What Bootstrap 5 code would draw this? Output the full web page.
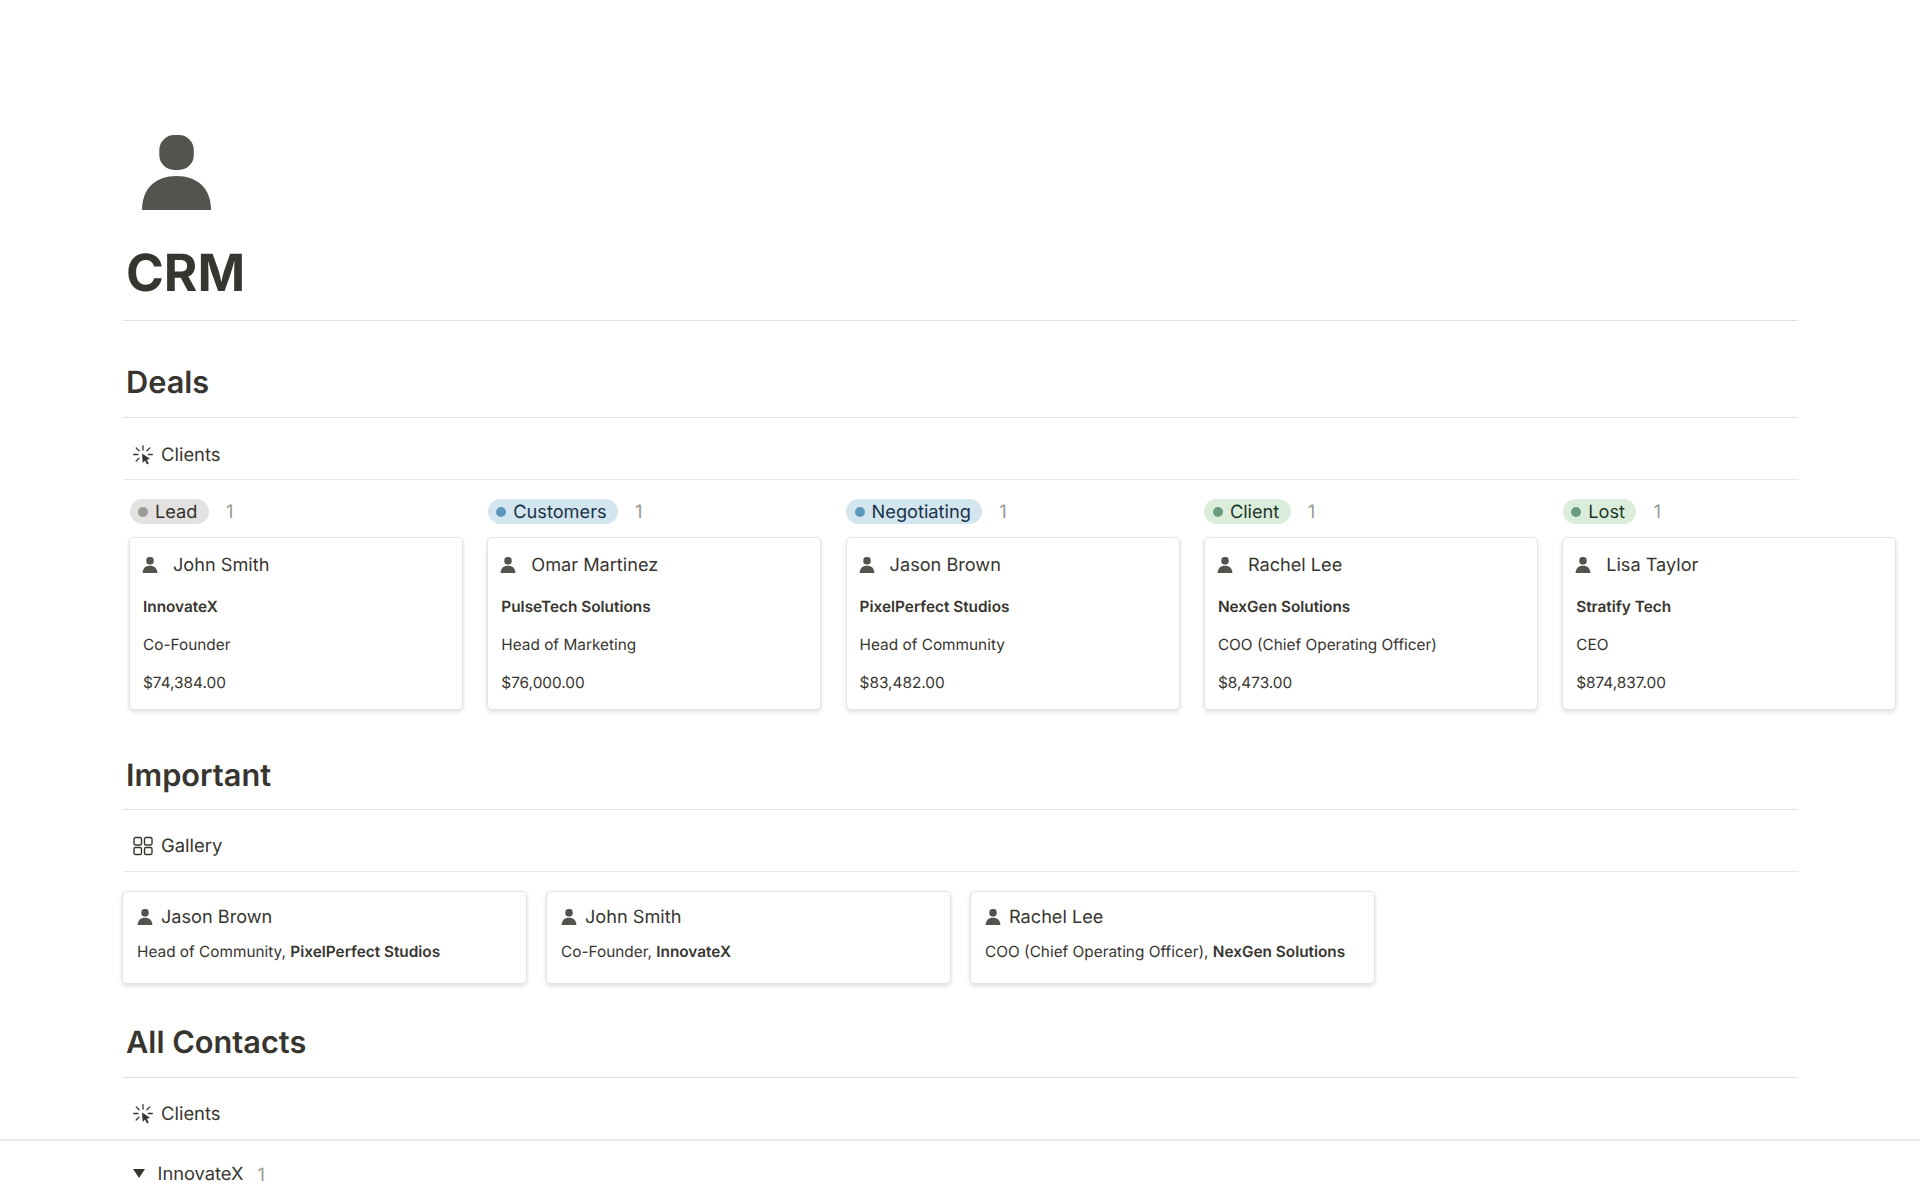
<!DOCTYPE html>
<html lang="en">
<head>
<meta charset="utf-8">
<title>CRM</title>
<link href="https://cdn.jsdelivr.net/npm/bootstrap@5.3.0/dist/css/bootstrap.min.css" rel="stylesheet">
<style>
html,body{height:1199px;overflow:hidden;background:#fff}
body{font-family:Inter,"Liberation Sans",sans-serif;color:#37352f;text-rendering:geometricPrecision}
.crm-page{margin-left:123px;width:1675px;padding-top:135px}
.crm-hero{display:block;width:69px;height:75px;margin-left:19px;fill:#55534e}
.crm-title{font-size:51.2px;font-weight:700;line-height:60px;margin:32px 0 0;padding:1px 0 0 3px;height:79px;color:#37352f}
.crm-rule{border-bottom:1px solid #e0e0de}
.crm-h2{font-size:30.72px;font-weight:600;line-height:36px;margin:0;padding:44px 0 16px 3px;color:#37352f}
.crm-tab{height:62px;padding:15px 0 0 10px;font-size:18.43px;gap:8px;border-bottom:1px solid #e9e9e7}
.crm-tab svg{width:20px;height:20px;flex:none;margin-top:-2px}
.crm-tabg{padding-top:12px}
.crm-board{padding:19px 0 0 6px;width:1800px;gap:24.3px}
.crm-col{width:334px;flex:none}
.crm-pillrow{height:25px;margin-bottom:13px;gap:17px;padding-left:.5px;font-size:18.43px}
.crm-pill{height:25px;border-radius:13px;padding:2px 11.500px 0 8.500px;gap:7px;font-size:18.2px;line-height:23px}
.crm-dot{width:10px;height:10px;border-radius:50%;flex:none;margin-top:-2px}
.crm-count{color:#9b9a97;padding-top:2px}
.crm-card{border-radius:5px;border:1px solid #e4e4e2;box-shadow:0 2px 4px rgba(15,15,15,.14);background:#fff;color:#37352f}
.crm-boardcard{height:172.5px;padding:0 13px}
.crm-name{font-size:18.15px;height:49px;padding-top:7px;gap:15px}
.crm-name svg{width:16px;height:16px;flex:none;margin:-2px 0 0 -1px;fill:#55534e}
.crm-line{font-size:15.36px;height:38.5px;line-height:38.5px;white-space:nowrap}
.crm-line.crm-b{padding-top:1px}
.crm-b{font-weight:600}
.crm-gallery{padding-top:19px;gap:19px;margin-left:-1px}
.crm-gcard{width:405px;height:92.5px;padding:13px 14px 0}
.crm-gname{font-size:18.15px;gap:8px;height:26px}
.crm-gname svg{width:16px;height:16px;flex:none;margin-top:-2px;fill:#55534e}
.crm-gtext{font-size:15.36px;line-height:24px;margin-top:9px;white-space:nowrap}
.crm-h2b{padding-top:48.500px;padding-bottom:15px}
.crm-h2c{padding-top:41.500px}
.crm-wide{width:1920px;margin-left:-123px;border-bottom:2px solid #e9e9e7}
.crm-tabc{height:61px;padding:12px 0 0 10px;font-size:18.43px;gap:8px}
.crm-tabc svg{width:20px;height:20px;flex:none;margin-top:-2px}
.crm-group{padding:19.500px 0 0 9.500px;font-size:18.3px;line-height:24px}
.crm-tri{width:12px;height:9px;fill:#37352f;margin-right:13px}
.crm-groupn{margin-right:14px}
</style>
</head>
<body>
<svg width="0" height="0" class="position-absolute">
  <defs>
    <symbol id="i-person" viewBox="0 0 69 75"><rect x="17.3" y="0" width="34.500" height="35" rx="15"/><path d="M0 75C0 53 14 41 34.500 41S69 53 69 75z"/></symbol>
    <symbol id="i-click" viewBox="0 0 20 20"><g stroke="#37352f" stroke-width="1.3" stroke-linecap="round" fill="none"><path d="M10 .7v4.300M.7 9.500h4.300M15.300 9.500h4M3.200 2.900l2.900 2.900M16.800 2.900l-2.900 2.900M3.200 16l2.900-2.900"/></g><path d="M9 8.500l8 5.200-3.200 1 2 3.900-1.800.9-2-3.900-2.300 2.400z" fill="#37352f"/></symbol>
    <symbol id="i-grid" viewBox="0 0 20 20"><g fill="none" stroke="#37352f" stroke-width="1.4"><rect x="1" y="1.500" width="7.500" height="7.500" rx="1.6"/><rect x="11.500" y="1.500" width="7.500" height="7.500" rx="1.6"/><rect x="1" y="11.500" width="7.500" height="7" rx="1.6"/><rect x="11.500" y="11.500" width="7.500" height="7" rx="1.6"/></g></symbol>
  </defs>
</svg>
<div class="crm-page">
  <svg class="crm-hero"><use href="#i-person"/></svg>
  <h1 class="crm-title crm-rule">CRM</h1>

  <h2 class="crm-h2 crm-rule">Deals</h2>
  <div class="crm-tab d-flex align-items-center"><svg><use href="#i-click"/></svg><span>Clients</span></div>
  <div class="crm-board d-flex">
    <div class="crm-col">
      <div class="crm-pillrow d-flex align-items-center"><span class="crm-pill d-inline-flex align-items-center" style="background:#e3e2e0;color:#32302c"><span class="crm-dot" style="background:#9b9a97"></span>Lead</span><span class="crm-count">1</span></div>
      <div class="card crm-card crm-boardcard">
        <div class="crm-name d-flex align-items-center"><svg><use href="#i-person"/></svg><span>John Smith</span></div>
        <div class="crm-line crm-b">InnovateX</div><div class="crm-line">Co-Founder</div><div class="crm-line">$74,384.00</div>
      </div>
    </div>
    <div class="crm-col">
      <div class="crm-pillrow d-flex align-items-center"><span class="crm-pill d-inline-flex align-items-center" style="background:#d3e5ef;color:#183347"><span class="crm-dot" style="background:#5b97bd"></span>Customers</span><span class="crm-count">1</span></div>
      <div class="card crm-card crm-boardcard">
        <div class="crm-name d-flex align-items-center"><svg><use href="#i-person"/></svg><span>Omar Martinez</span></div>
        <div class="crm-line crm-b">PulseTech Solutions</div><div class="crm-line">Head of Marketing</div><div class="crm-line">$76,000.00</div>
      </div>
    </div>
    <div class="crm-col">
      <div class="crm-pillrow d-flex align-items-center"><span class="crm-pill d-inline-flex align-items-center" style="background:#d3e5ef;color:#183347"><span class="crm-dot" style="background:#5b97bd"></span>Negotiating</span><span class="crm-count">1</span></div>
      <div class="card crm-card crm-boardcard">
        <div class="crm-name d-flex align-items-center"><svg><use href="#i-person"/></svg><span>Jason Brown</span></div>
        <div class="crm-line crm-b">PixelPerfect Studios</div><div class="crm-line">Head of Community</div><div class="crm-line">$83,482.00</div>
      </div>
    </div>
    <div class="crm-col">
      <div class="crm-pillrow d-flex align-items-center"><span class="crm-pill d-inline-flex align-items-center" style="background:#dbeddb;color:#1c3829"><span class="crm-dot" style="background:#6c9b7d"></span>Client</span><span class="crm-count">1</span></div>
      <div class="card crm-card crm-boardcard">
        <div class="crm-name d-flex align-items-center"><svg><use href="#i-person"/></svg><span>Rachel Lee</span></div>
        <div class="crm-line crm-b">NexGen Solutions</div><div class="crm-line">COO (Chief Operating Officer)</div><div class="crm-line">$8,473.00</div>
      </div>
    </div>
    <div class="crm-col">
      <div class="crm-pillrow d-flex align-items-center"><span class="crm-pill d-inline-flex align-items-center" style="background:#dbeddb;color:#1c3829"><span class="crm-dot" style="background:#6c9b7d"></span>Lost</span><span class="crm-count">1</span></div>
      <div class="card crm-card crm-boardcard">
        <div class="crm-name d-flex align-items-center"><svg><use href="#i-person"/></svg><span>Lisa Taylor</span></div>
        <div class="crm-line crm-b">Stratify Tech</div><div class="crm-line">CEO</div><div class="crm-line">$874,837.00</div>
      </div>
    </div>
  </div>

  <h2 class="crm-h2 crm-h2b crm-rule">Important</h2>
  <div class="crm-tab crm-tabg d-flex align-items-center"><svg><use href="#i-grid"/></svg><span>Gallery</span></div>
  <div class="crm-gallery d-flex">
    <div class="card crm-card crm-gcard"><div class="crm-gname d-flex align-items-center"><svg><use href="#i-person"/></svg><span>Jason Brown</span></div><div class="crm-gtext">Head of Community, <span class="crm-b">PixelPerfect Studios</span></div></div>
    <div class="card crm-card crm-gcard"><div class="crm-gname d-flex align-items-center"><svg><use href="#i-person"/></svg><span>John Smith</span></div><div class="crm-gtext">Co-Founder, <span class="crm-b">InnovateX</span></div></div>
    <div class="card crm-card crm-gcard"><div class="crm-gname d-flex align-items-center"><svg><use href="#i-person"/></svg><span>Rachel Lee</span></div><div class="crm-gtext">COO (Chief Operating Officer), <span class="crm-b">NexGen Solutions</span></div></div>
  </div>

  <h2 class="crm-h2 crm-h2c crm-rule">All Contacts</h2>
  <div class="crm-tabc d-flex align-items-center"><svg><use href="#i-click"/></svg><span>Clients</span></div>
  <div class="crm-wide"></div>
  <div class="crm-group d-flex align-items-center"><svg class="crm-tri" viewBox="0 0 12 9" preserveAspectRatio="none"><path d="M0 0h12L6 9z"/></svg><span class="crm-groupn">InnovateX</span><span class="crm-count">1</span></div>
</div>
<script src="https://cdn.jsdelivr.net/npm/bootstrap@5.3.0/dist/js/bootstrap.bundle.min.js"></script>
</body>
</html>
